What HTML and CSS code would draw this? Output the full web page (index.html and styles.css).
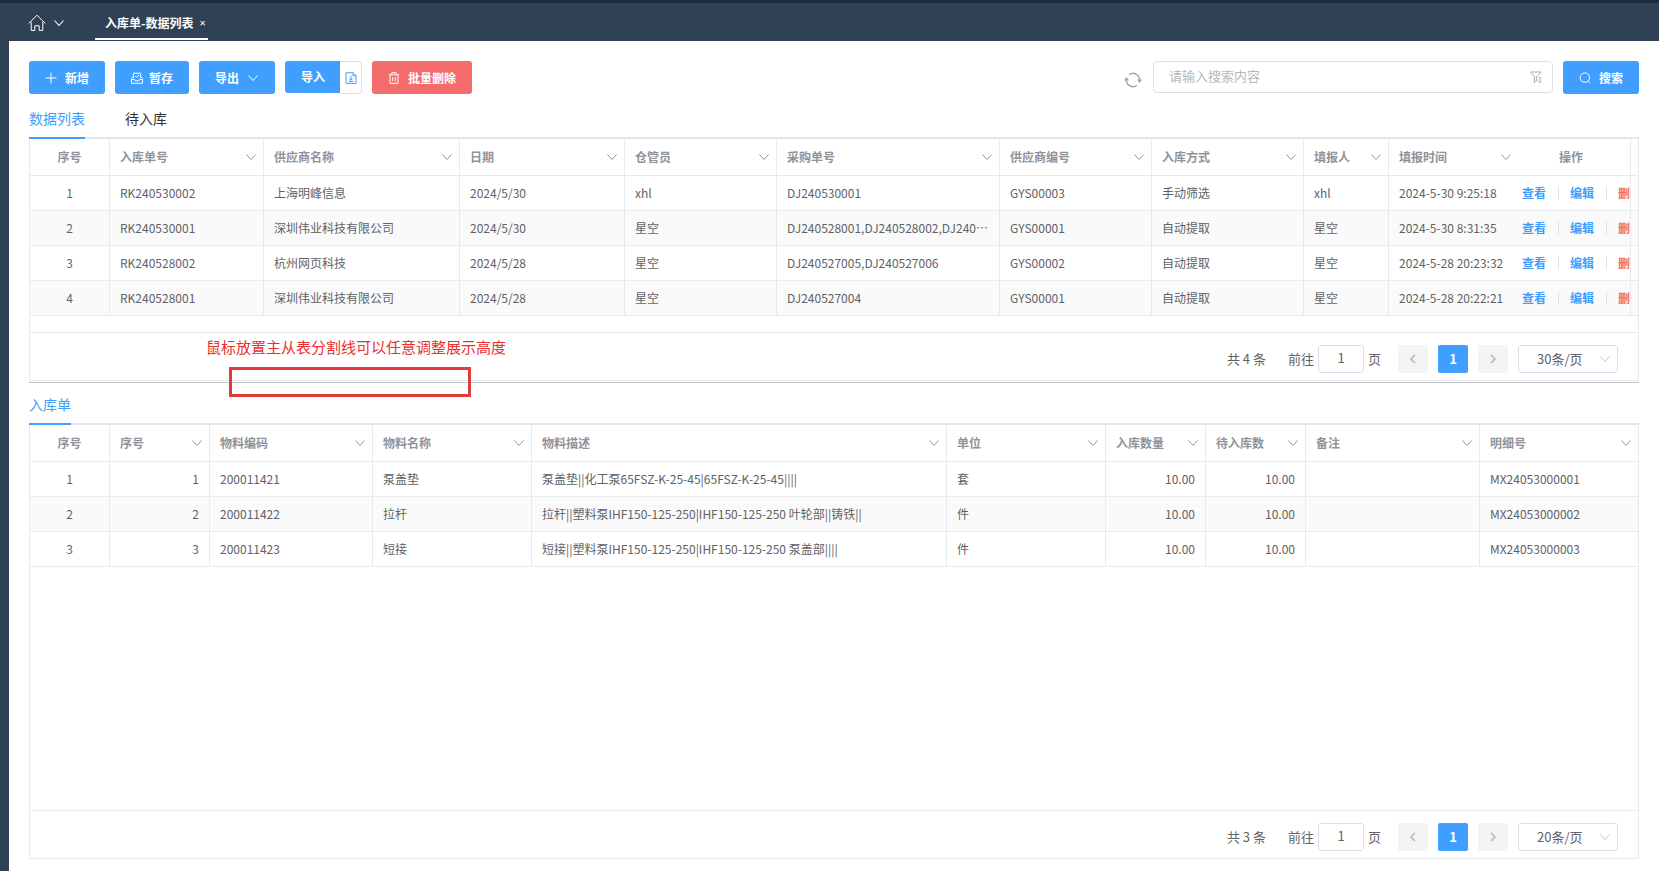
FILE: index.html
```html
<!DOCTYPE html>
<html lang="zh-CN">
<head>
  <meta charset="UTF-8">
  <meta name="viewport" content="width=device-width, initial-scale=1.0">
  <title>入库单-数据列表</title>
  <link rel="stylesheet" href="styles.css">
</head>
<body>
  <svg class="sprite" aria-hidden="true">
    <symbol id="arrow-down" viewBox="0 0 12 12"><path d="M1.5 3.5 6 8.5l4.5-5"/></symbol>
  </svg>

  <header class="topbar">
    <button class="home" type="button" aria-label="首页">
      <svg class="icon icon-home" viewBox="0 0 18 18"><path d="M.8 9.4 9 1.2l8.2 8.2M3.2 7.8v8.6h3.6v-4.6h4.4v4.6h3.6V7.8"/></svg>
      <svg class="icon icon-caret"><use href="#arrow-down"/></svg>
    </button>
    <div class="page-tab">
      <a href="#list">入库单-数据列表</a>
      <button type="button" aria-label="关闭">×</button>
    </div>
  </header>

  <main class="page">
    <div class="toolbar">
      <button class="btn" type="button">
        <svg class="icon" viewBox="0 0 12 12"><path d="M6 .5v11M.5 6h11"/></svg>新增
      </button>
      <button class="btn btn-save" type="button">
        <svg class="icon" viewBox="0 0 12 12"><path d="M.6 6.5v4.8h10.8V6.5L9.6 4.4M.6 6.5l1.8-2.1M.6 7.5h3l.8 1.4h3.2l.8-1.4h3M2.4 6V1.2h7.2V6M4.3 4l1.4 1.4L8 3"/></svg>暂存
      </button>
      <button class="btn" type="button">
        导出<svg class="icon"><use href="#arrow-down"/></svg>
      </button>
      <div class="btn-group">
        <button class="btn" type="button">导入</button>
        <button class="btn-template" type="button" aria-label="下载模板">
          <svg class="icon" viewBox="0 0 12 12"><path d="M1 .8h7.2L11 3.6v7.8H1zM8 .8v3h3M6 3.6v4.6M4.2 6.4 6 8.2l1.8-1.8M3.6 9.4h4.8"/></svg>
        </button>
      </div>
      <button class="btn btn-danger" type="button">
        <svg class="icon" viewBox="0 0 12 12"><path d="M.8 2.8h10.4M3.8 2.6V.7h4.4v1.9M2 3v8.4h8V3M4.7 5v4.3M7.3 5v4.3"/></svg>批量删除
      </button>

      <button class="refresh" type="button" aria-label="刷新">
        <svg class="icon" viewBox="0 0 18 18"><path d="M15.6 9A6.6 6.6 0 0 0 5 3.7M2.4 9A6.6 6.6 0 0 0 13 14.3"/><path class="solid" d="M0 9.4 2.4 6l2.6 3.4zM13 8.6h5L15.6 12z"/></svg>
      </button>
      <label class="search">
        <input type="text" placeholder="请输入搜索内容" aria-label="搜索内容">
        <svg class="icon" viewBox="0 0 12 12"><path d="M.5 1h10.6L7.4 5.2M.5 1l3.9 4.6v5.8l2-1V5.2M8.2 6.8h3.2M8.2 9h3.2M8.2 11.2h3.2"/></svg>
      </label>
      <button class="btn" type="button">
        <svg class="icon" viewBox="0 0 12 12"><circle cx="5.8" cy="5.6" r="4.7"/><path d="m9 9.2 2 2"/></svg>搜索
      </button>
    </div>

    <section class="panel panel-master" id="list">
      <nav class="tabs">
        <a class="active" href="#list">数据列表</a>
        <a href="#pending">待入库</a>
      </nav>
      <div class="grid">
        <table>
          <colgroup>
            <col class="w-80"><col class="w-154"><col class="w-196"><col class="w-165"><col class="w-152"><col>
            <col class="w-152"><col class="w-152"><col class="w-85"><col class="w-123"><col class="w-119"><col class="w-7">
          </colgroup>
          <thead>
            <tr>
              <th class="center">序号</th>
              <th><div class="head">入库单号<svg class="icon"><use href="#arrow-down"/></svg></div></th>
              <th><div class="head">供应商名称<svg class="icon"><use href="#arrow-down"/></svg></div></th>
              <th><div class="head">日期<svg class="icon"><use href="#arrow-down"/></svg></div></th>
              <th><div class="head">仓管员<svg class="icon"><use href="#arrow-down"/></svg></div></th>
              <th><div class="head">采购单号<svg class="icon"><use href="#arrow-down"/></svg></div></th>
              <th><div class="head">供应商编号<svg class="icon"><use href="#arrow-down"/></svg></div></th>
              <th><div class="head">入库方式<svg class="icon"><use href="#arrow-down"/></svg></div></th>
              <th><div class="head">填报人<svg class="icon"><use href="#arrow-down"/></svg></div></th>
              <th class="time"><div class="head">填报时间<svg class="icon"><use href="#arrow-down"/></svg></div></th>
              <th class="center">操作</th>
              <th class="gutter"></th>
            </tr>
          </thead>
          <tbody>
            <tr>
              <td class="center">1</td><td>RK240530002</td><td>上海明峰信息</td><td>2024/5/30</td><td>xhl</td>
              <td>DJ240530001</td><td>GYS00003</td><td>手动筛选</td><td>xhl</td><td class="time">2024-5-30 9:25:18</td>
              <td class="ops"><div><a href="#view">查看</a><a href="#edit">编辑</a><a class="del" href="#del">删</a></div></td><td class="gutter"></td>
            </tr>
            <tr>
              <td class="center">2</td><td>RK240530001</td><td>深圳伟业科技有限公司</td><td>2024/5/30</td><td>星空</td>
              <td>DJ240528001,DJ240528002,DJ240⋯</td><td>GYS00001</td><td>自动提取</td><td>星空</td><td class="time">2024-5-30 8:31:35</td>
              <td class="ops"><div><a href="#view">查看</a><a href="#edit">编辑</a><a class="del" href="#del">删</a></div></td><td class="gutter"></td>
            </tr>
            <tr>
              <td class="center">3</td><td>RK240528002</td><td>杭州网页科技</td><td>2024/5/28</td><td>星空</td>
              <td>DJ240527005,DJ240527006</td><td>GYS00002</td><td>自动提取</td><td>星空</td><td class="time">2024-5-28 20:23:32</td>
              <td class="ops"><div><a href="#view">查看</a><a href="#edit">编辑</a><a class="del" href="#del">删</a></div></td><td class="gutter"></td>
            </tr>
            <tr>
              <td class="center">4</td><td>RK240528001</td><td>深圳伟业科技有限公司</td><td>2024/5/28</td><td>星空</td>
              <td>DJ240527004</td><td>GYS00001</td><td>自动提取</td><td>星空</td><td class="time">2024-5-28 20:22:21</td>
              <td class="ops"><div><a href="#view">查看</a><a href="#edit">编辑</a><a class="del" href="#del">删</a></div></td><td class="gutter"></td>
            </tr>
          </tbody>
        </table>
      </div>
      <div class="pager">
        <span class="total">共 4 条</span>
        <label class="jump">前往<input type="text" value="1">页</label>
        <button class="page-btn" type="button" aria-label="上一页" disabled><svg class="icon" viewBox="0 0 12 12"><path d="M8 2 4 6l4 4"/></svg></button>
        <button class="page-btn current" type="button">1</button>
        <button class="page-btn" type="button" aria-label="下一页" disabled><svg class="icon" viewBox="0 0 12 12"><path d="m4 2 4 4-4 4"/></svg></button>
        <div class="size">
          <select aria-label="每页条数"><option>30条/页</option><option>50条/页</option></select>
          <svg class="icon"><use href="#arrow-down"/></svg>
        </div>
      </div>
      <div class="note">鼠标放置主从表分割线可以任意调整展示高度</div>
      <div class="note-box"></div>
    </section>

    <section class="panel panel-detail" id="detail">
      <nav class="tabs">
        <a class="active" href="#detail">入库单</a>
      </nav>
      <div class="grid">
        <table>
          <colgroup>
            <col class="w-80"><col class="w-100"><col class="w-163"><col class="w-159"><col>
            <col class="w-159"><col class="w-100"><col class="w-100"><col class="w-174"><col class="w-158">
          </colgroup>
          <thead>
            <tr>
              <th class="center">序号</th>
              <th><div class="head">序号<svg class="icon"><use href="#arrow-down"/></svg></div></th>
              <th><div class="head">物料编码<svg class="icon"><use href="#arrow-down"/></svg></div></th>
              <th><div class="head">物料名称<svg class="icon"><use href="#arrow-down"/></svg></div></th>
              <th><div class="head">物料描述<svg class="icon"><use href="#arrow-down"/></svg></div></th>
              <th><div class="head">单位<svg class="icon"><use href="#arrow-down"/></svg></div></th>
              <th><div class="head">入库数量<svg class="icon"><use href="#arrow-down"/></svg></div></th>
              <th><div class="head">待入库数<svg class="icon"><use href="#arrow-down"/></svg></div></th>
              <th><div class="head">备注<svg class="icon"><use href="#arrow-down"/></svg></div></th>
              <th><div class="head">明细号<svg class="icon"><use href="#arrow-down"/></svg></div></th>
            </tr>
          </thead>
          <tbody>
            <tr>
              <td class="center">1</td><td class="num">1</td><td>200011421</td><td>泵盖垫</td>
              <td>泵盖垫||化工泵65FSZ-K-25-45|65FSZ-K-25-45||||</td><td>套</td>
              <td class="num">10.00</td><td class="num">10.00</td><td></td><td>MX24053000001</td>
            </tr>
            <tr>
              <td class="center">2</td><td class="num">2</td><td>200011422</td><td>拉杆</td>
              <td>拉杆||塑料泵IHF150-125-250|IHF150-125-250 叶轮部||铸铁||</td><td>件</td>
              <td class="num">10.00</td><td class="num">10.00</td><td></td><td>MX24053000002</td>
            </tr>
            <tr>
              <td class="center">3</td><td class="num">3</td><td>200011423</td><td>短接</td>
              <td>短接||塑料泵IHF150-125-250|IHF150-125-250 泵盖部||||</td><td>件</td>
              <td class="num">10.00</td><td class="num">10.00</td><td></td><td>MX24053000003</td>
            </tr>
          </tbody>
        </table>
      </div>
      <div class="pager">
        <span class="total">共 3 条</span>
        <label class="jump">前往<input type="text" value="1">页</label>
        <button class="page-btn" type="button" aria-label="上一页" disabled><svg class="icon" viewBox="0 0 12 12"><path d="M8 2 4 6l4 4"/></svg></button>
        <button class="page-btn current" type="button">1</button>
        <button class="page-btn" type="button" aria-label="下一页" disabled><svg class="icon" viewBox="0 0 12 12"><path d="m4 2 4 4-4 4"/></svg></button>
        <div class="size">
          <select aria-label="每页条数"><option>20条/页</option><option>50条/页</option></select>
          <svg class="icon"><use href="#arrow-down"/></svg>
        </div>
      </div>
    </section>
  </main>
</body>
</html>
```
FILE: styles.css
```css
* {
  box-sizing: border-box;
}
body {
  margin: 0;
  min-height: 100vh;
  display: flex;
  flex-direction: column;
  background-color: #304156;
  color: #606266;
  font-family: "Noto Sans CJK SC", sans-serif;
  font-size: 12px;
  line-height: 18px;
}
button, input, select {
  font: inherit;
  color: inherit;
  margin: 0;
}
button {
  padding: 0;
  border: none;
  background: none;
  cursor: pointer;
}
a {
  color: inherit;
  text-decoration: none;
}
.sprite {
  position: absolute;
  width: 0;
  height: 0;
}
.icon {
  width: 12px;
  height: 12px;
  flex: none;
  fill: none;
  stroke: currentColor;
  stroke-width: 1;
}

/* top bar */
.topbar {
  display: flex;
  height: 41px;
  padding-left: 28px;
  border-top: 3px solid #202a38;
  color: #fff;
}
.home {
  display: flex;
  align-items: center;
  gap: 7px;
  width: 67px;
  padding-top: 2px;
}
.icon-home {
  width: 18px;
  height: 18px;
}
.icon-caret {
  stroke-width: 1.1;
}
.page-tab {
  display: flex;
  align-items: center;
  gap: 6px;
  height: 37px;
  padding: 4px 2px 0 10px;
  border-bottom: 2px solid #fff;
  font-weight: bold;
}
.page-tab button {
  font-family: "Noto Sans", sans-serif;
  font-size: 11px;
  font-weight: normal;
}

/* page */
.page {
  flex: 1;
  display: flex;
  flex-direction: column;
  margin-left: 9px;
  padding: 20px 20px 12px;
  background-color: #fff;
}
.toolbar {
  display: flex;
  align-items: flex-start;
  gap: 10px;
  height: 42px;
}
.btn {
  display: flex;
  align-items: center;
  gap: 8px;
  height: 33px;
  padding: 0 16px;
  border-radius: 3px;
  background-color: #409eff;
  color: #fff;
  font-weight: bold;
}
.btn-save {
  gap: 6px;
}
.btn-danger {
  background-color: #f56c6c;
}
.btn-group {
  display: flex;
}
.btn-group .btn {
  height: 32px;
  padding-right: 15px;
  border-radius: 3px 0 0 3px;
}
.btn-template {
  width: 22px;
  height: 33px;
  border: 1px solid #dcdfe6;
  border-left: none;
  border-radius: 0 3px 3px 0;
  color: #409eff;
}
.btn-template .icon {
  display: block;
  margin: auto;
}
.refresh {
  display: flex;
  align-items: center;
  height: 38px;
  margin: 0 1px 0 auto;
  color: #a0a3a8;
}
.refresh .icon {
  width: 18px;
  height: 18px;
  stroke-width: 1.4;
}
.refresh .solid {
  fill: currentColor;
  stroke: none;
}
.search {
  display: flex;
  align-items: center;
  width: 400px;
  height: 32px;
  padding: 0 10px 0 15px;
  border: 1px solid #dcdfe6;
  border-radius: 4px;
  color: #a8abb2;
}
.search input {
  flex: 1;
  border: none;
  outline: none;
  padding: 0 0 2px;
  font-size: 13px;
}
.search input::placeholder {
  color: #b4b7bd;
}

/* tabs */
.panel {
  position: relative;
  display: flex;
  flex-direction: column;
}
.panel-master {
  height: 280px;
  border-bottom: 1px solid #c0c4cc;
}
.panel-detail {
  flex: 1;
  padding-top: 6px;
}
.tabs {
  display: flex;
  gap: 40px;
  height: 36px;
  border-bottom: 2px solid #e4e6e9;
  color: #303133;
  font-size: 14px;
  line-height: 30px;
}
.tabs a {
  height: 36px;
}
.tabs .active {
  border-bottom: 2px solid #409eff;
  color: #409eff;
}

/* tables */
.grid {
  flex: 1;
  border: 1px solid #e9eaec;
  border-width: 0 1px;
}
table {
  width: 100%;
  table-layout: fixed;
  border-collapse: separate;
  border-spacing: 0;
}
th, td {
  height: 35px;
  padding: 0 0 0 10px;
  border-right: 1px solid #e9eaec;
  border-bottom: 1px solid #e9eaec;
  text-align: left;
  white-space: nowrap;
  overflow: hidden;
}
th {
  height: 37px;
  color: #909399;
}
th:last-child, td:last-child, .time {
  border-right: none;
}
tbody tr:nth-child(even) {
  background-color: #fafafa;
}
.head {
  display: flex;
  align-items: center;
  justify-content: space-between;
  padding-right: 6px;
}
.time .head {
  padding-right: 0;
}
.center {
  padding: 0;
  text-align: center;
}
.num {
  padding: 0 10px 0 0;
  text-align: right;
}
.gutter {
  padding: 0;
}
.ops div {
  display: flex;
  align-items: center;
  color: #409eff;
  font-weight: bold;
}
.ops a + a {
  margin-left: 12px;
  padding-left: 12px;
  background: linear-gradient(#dcdfe6, #dcdfe6) left center / 1px 12px no-repeat;
}
.ops .del {
  color: #f56c6c;
}
.w-7 { width: 7px; }
.w-80 { width: 80px; }
.w-85 { width: 85px; }
.w-100 { width: 100px; }
.w-119 { width: 119px; }
.w-123 { width: 123px; }
.w-152 { width: 152px; }
.w-154 { width: 154px; }
.w-158 { width: 158px; }
.w-159 { width: 159px; }
.w-163 { width: 163px; }
.w-165 { width: 165px; }
.w-174 { width: 174px; }
.w-196 { width: 196px; }

/* pager */
.pager {
  display: flex;
  align-items: center;
  justify-content: flex-end;
  gap: 10px;
  height: 49px;
  padding: 4px 20px 0 0;
  margin-bottom: 1px;
  border: 1px solid #e9eaec;
  font-size: 13px;
}
.panel-detail .pager {
  margin-bottom: 0;
}
.total {
  margin-right: 12px;
}
.jump {
  display: flex;
  align-items: center;
  gap: 4px;
  margin-right: 7px;
}
.jump input {
  width: 46px;
  height: 28px;
  padding: 0 0 2px;
  border: 1px solid #dcdfe6;
  border-radius: 3px;
  text-align: center;
}
.page-btn {
  display: flex;
  align-items: center;
  justify-content: center;
  width: 30px;
  height: 28px;
  border-radius: 2px;
  background-color: #f4f4f5;
  color: #c0c4cc;
}
.page-btn .icon {
  stroke-width: 2;
}
.page-btn.current {
  background-color: #409eff;
  color: #fff;
  font-weight: bold;
}
.size {
  display: flex;
  align-items: center;
  width: 100px;
  height: 28px;
  border: 1px solid #dcdfe6;
  border-radius: 3px;
  color: #606266;
}
.size select {
  flex: 1;
  height: 26px;
  padding: 0 0 0 18px;
  border: none;
  outline: none;
  background: none;
  appearance: none;
}
.size .icon {
  margin-right: 6px;
  color: #c0c4cc;
}

/* hint drawn over the splitter */
.note {
  position: absolute;
  left: 177px;
  bottom: 24px;
  color: #e8302e;
  font-size: 15px;
  line-height: 22px;
}
.note-box {
  position: absolute;
  left: 200px;
  bottom: -15px;
  width: 242px;
  height: 30px;
  border: 3px solid #e03c3a;
}
```
